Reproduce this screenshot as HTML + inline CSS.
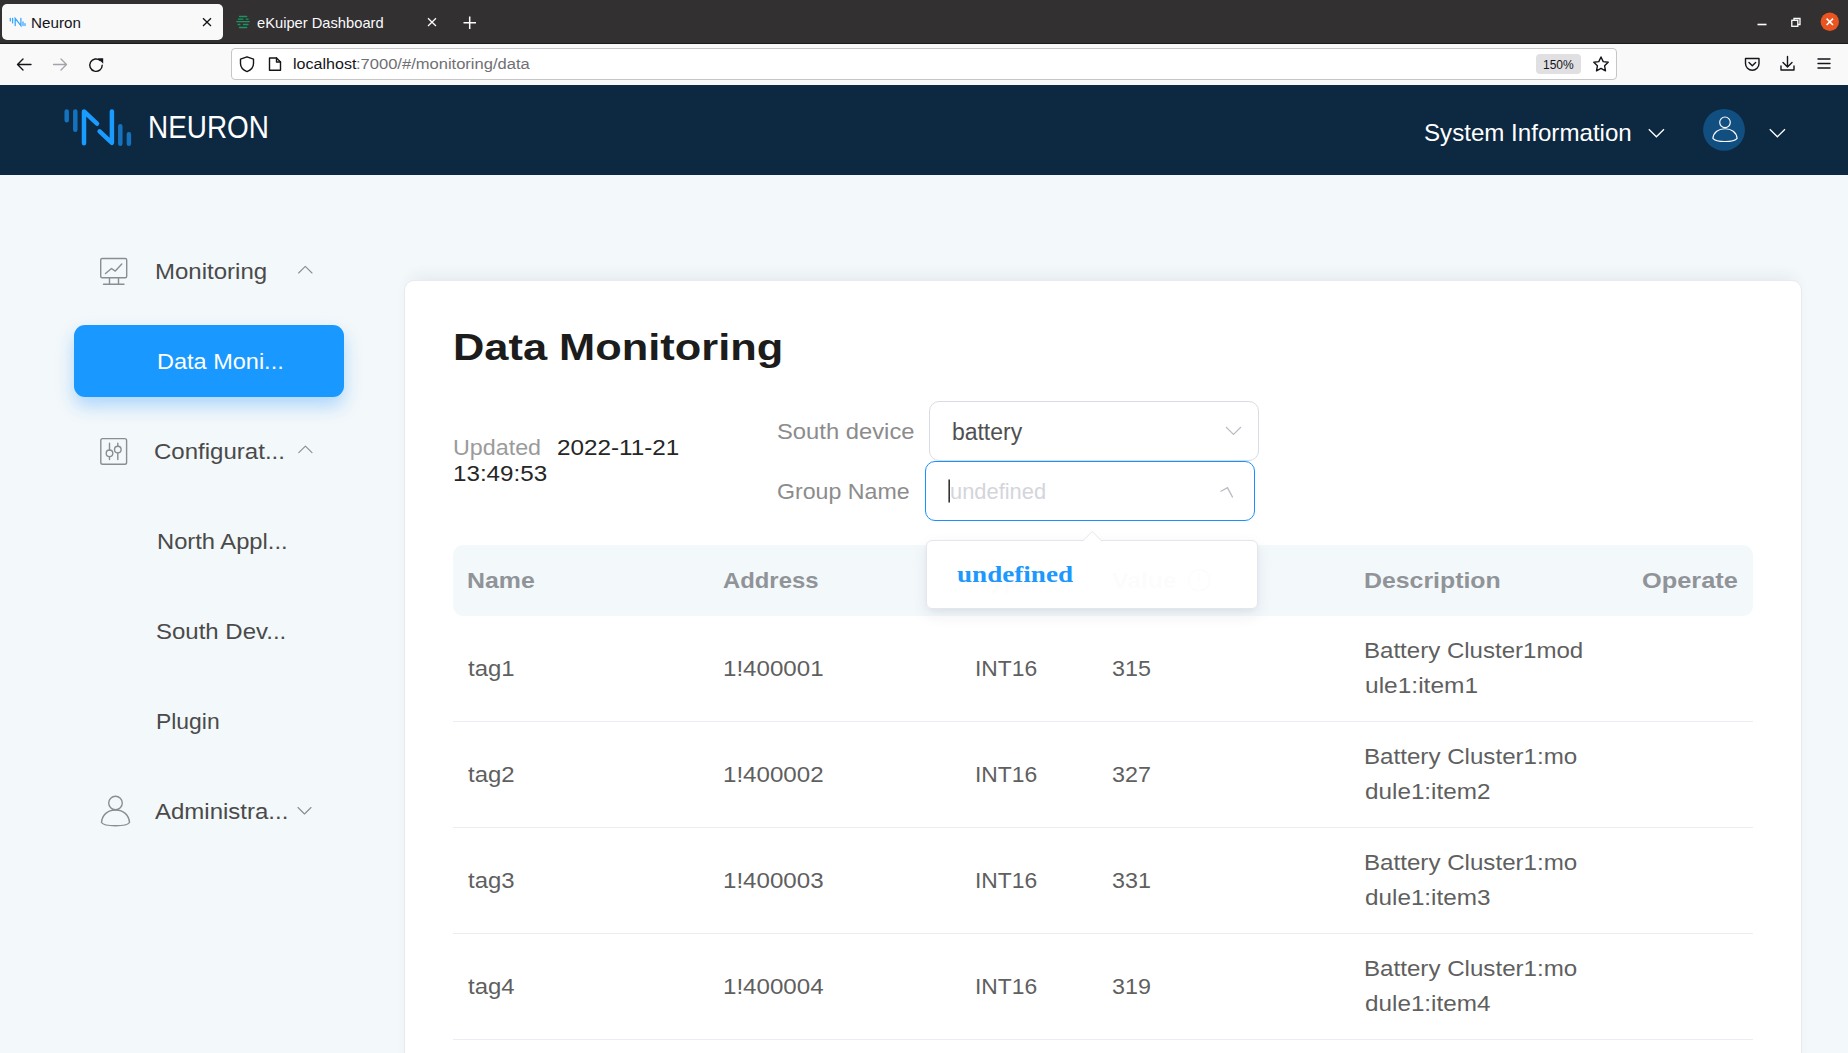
<!DOCTYPE html>
<html><head><meta charset="utf-8">
<style>
*{margin:0;padding:0;box-sizing:border-box}
html,body{width:1848px;height:1053px;overflow:hidden;background:#f3f8fa;font-family:"Liberation Sans",sans-serif;position:relative}
.t{position:absolute;white-space:nowrap;line-height:1;transform-origin:0 0}
.b{position:absolute}
svg{position:absolute;overflow:visible}
</style></head><body>
<!-- browser chrome -->
<div class="b" style="left:0;top:0;width:1848px;height:44px;background:#323031"></div>
<div class="b" style="left:2px;top:4px;width:221px;height:36px;background:#f9f9f9;border-radius:5px"></div>
<div class="b" style="left:0;top:44px;width:1848px;height:41px;background:#f9f9f9"></div>
<div class="b" style="left:0;top:43px;width:1848px;height:1px;background:#1c1b1c"></div>
<div class="b" style="left:231px;top:48px;width:1386px;height:32px;background:#fff;border:1px solid #c6c6c9;border-radius:4px"></div>
<div class="b" style="left:1536px;top:54px;width:45px;height:20px;background:#e0e0e2;border-radius:4px"></div>
<svg width="1848" height="85" style="left:0;top:0">
 <!-- tab favicon neuron -->
 <g stroke="#3ea6ff" stroke-width="1.3" stroke-linecap="round" fill="none">
  <path d="M10.3 18.3v2.6M12.6 18.3v4.6M15.2 25.6V18.3L20.9 25.6V18.3M23 22v3.6M25 23.6v2"/>
 </g>
 <!-- close x tab1 -->
 <path d="M203 18.3l8 7.7M211 18.3l-8 7.7" stroke="#15141a" stroke-width="1.3"/>
 <!-- ekuiper favicon -->
 <g stroke="#1a9563" stroke-width="1.3" stroke-linecap="round">
  <path d="M239.5 16.5h7.2M238.3 19.1h4.6M246.2 19.1h1.9M236.8 21.6h12.5M238.1 24.5h1.9M243.4 24.5h4.6M239.5 27.5h7.2"/>
 </g>
 <path d="M428 18.3l8 7.7M436 18.3l-8 7.7" stroke="#fbfbfe" stroke-width="1.3"/>
 <path d="M469.7 16.5v12.5M463.5 22.7h12.5" stroke="#fbfbfe" stroke-width="1.5"/>
 <!-- window controls -->
 <path d="M1757.5 24.5h9" stroke="#fff" stroke-width="1.6"/>
 <rect x="1791.8" y="20.3" width="6" height="6" stroke="#fff" stroke-width="1.3" fill="none"/>
 <path d="M1794 20.3v-1.8h6v6h-2" stroke="#fff" stroke-width="1.3" fill="none"/>
 <circle cx="1829.8" cy="21.8" r="9.2" fill="#e95420"/>
 <path d="M1826.6 18.6l6.4 6.4M1833 18.6l-6.4 6.4" stroke="#fff" stroke-width="1.6"/>
 <!-- nav icons -->
 <g stroke="#15141a" stroke-width="1.4" fill="none" stroke-linecap="round" stroke-linejoin="round">
  <path d="M17.5 64.5h13.5M23 59l-5.5 5.5 5.5 5.5"/>
  <path d="M100.2 60.6A6.2 6.2 0 1 0 102.2 65.2"/>
 </g>
 <path d="M97.8 58.3h5.4v5.4z" fill="#15141a"/>
 <g stroke="#a3a3ab" stroke-width="1.3" fill="none" stroke-linecap="round" stroke-linejoin="round">
  <path d="M53.5 64.5h13M61 59l5.5 5.5-5.5 5.5"/>
 </g>
 <g stroke="#15141a" stroke-width="1.4" fill="none" stroke-linejoin="round" stroke-linecap="round">
  <path d="M247 56.8l6.5 2.3v4.5c0 4-2.8 6.6-6.5 8-3.7-1.4-6.5-4-6.5-8v-4.5z"/>
  <path d="M269.5 58h7l4 4v8.2h-11z"/>
  <path d="M276.5 58v4h4"/>
  <path d="M1601 57l2.2 4.6 5 .7-3.6 3.5.9 5-4.5-2.4-4.5 2.4.9-5-3.6-3.5 5-.7z"/>
  <path d="M1745.5 58.5h13.5v5a6.75 6.75 0 0 1-13.5 0z"/>
  <path d="M1749 62.5l3.3 3.2 3.3-3.2"/>
  <path d="M1787.5 56.5v10M1783 62.5l4.5 4.5 4.5-4.5M1781 66v4h13v-4"/>
  <path d="M1818 59h12M1818 63.5h12M1818 68h12"/>
 </g>
</svg>
<!-- app header -->
<div class="b" style="left:0;top:85px;width:1848px;height:90px;background:#0d2841"></div>
<svg width="1848" height="90" style="left:0;top:85px">
 <g stroke-linecap="round" stroke-width="4.5" fill="none" stroke-linejoin="round">
  <path d="M66.7 26.5v8.8M75.3 26.5v18.3M120.3 41.2v17.5M128.9 49.3v9.4" stroke="#1572bd"/>
  <path d="M84 58.3V26.4L97 38.6M99.6 46.4L111.9 57.8V26.4" stroke="#1a9bff"/>
 </g>
 <path d="M1648.8 44.2l7.6 7.6 7.6-7.6" stroke="#fff" stroke-width="1.3" fill="none"/>
 <circle cx="1724" cy="44.9" r="20.9" fill="#114f80"/>
 <g stroke="#fff" stroke-width="1.15" fill="none">
  <circle cx="1725" cy="37.3" r="5.3"/>
  <path d="M1712.9 53.3c0.6-6 5.6-9.6 12.1-9.6s11.5 3.6 12.1 9.6c-1.6 2.2-6.6 3.2-12.1 3.2s-10.5-1-12.1-3.2z"/>
 </g>
 <path d="M1769.8 44.2l7.6 7.6 7.6-7.6" stroke="#fff" stroke-width="1.3" fill="none"/>
</svg>
<!-- sidebar -->
<div class="b" style="left:74px;top:325px;width:270px;height:72px;background:#1998ff;border-radius:11px;box-shadow:0 9px 18px rgba(24,144,255,0.32)"></div>
<svg width="400" height="900" style="left:0;top:0">
 <g stroke="#8a8d93" stroke-width="1.4" fill="none" stroke-linejoin="round" stroke-linecap="round">
  <rect x="100.7" y="258.5" width="26" height="19.3" rx="1.5"/>
  <path d="M105.5 273.5l6-5 3.8 2.6 6.5-7"/>
  <path d="M109.5 278v6M118.5 278v6M103.5 284.3h20.5"/>
  <path d="M298.6 273l6.7-6.6 6.7 6.6" stroke-width="1.1"/>
  <rect x="100.8" y="438.6" width="25.8" height="25.6" rx="1.8"/>
  <path d="M109.5 443.2v6.8M109.5 456.6v3M117.8 443.2v3M117.8 453v6.6"/>
  <circle cx="109.5" cy="453.3" r="3.3"/>
  <circle cx="117.8" cy="449.6" r="3.3"/>
  <path d="M298.8 452.7l6.6-6.6 6.6 6.6" stroke-width="1.1"/>
  <circle cx="115.5" cy="803" r="6.8"/>
  <path d="M101.5 822.5c0.5-7 5.5-12.5 14-12.5s13.5 5.5 14 12.5c-1.5 2.5-7 3.2-14 3.2s-12.5-.7-14-3.2z"/>
  <path d="M298 807.5l6.5 6.5 6.5-6.5" stroke-width="1.1"/>
 </g>
</svg>
<!-- card -->
<div class="b" style="left:404px;top:280px;width:1398px;height:820px;background:#fff;border:1px solid #e8eaf1;border-radius:10px;box-shadow:0 -10px 16px -8px rgba(40,60,100,0.09)"></div>
<!-- selects -->
<div class="b" style="left:929px;top:401px;width:330px;height:60px;background:#fff;border:1px solid #d9dce3;border-radius:10px"></div>
<div class="b" style="left:925px;top:461px;width:330px;height:60px;background:#fff;border:1.5px solid #1890ff;border-radius:10px"></div>
<svg width="1848" height="1053" style="left:0;top:0">
 <path d="M1226 427l7.5 7.5 7.5-7.5" stroke="#b9bcc4" stroke-width="1.2" fill="none"/>
 <path d="M1220.5 491.5l7-3.8 5.2 9.8" stroke="#b9bcc4" stroke-width="1.4" fill="none"/>
 <path d="M949.2 479.5v23" stroke="#333" stroke-width="1.6"/>
</svg>
<!-- table -->
<div class="b" style="left:453px;top:545px;width:1300px;height:71px;background:#f3f8fb;border-radius:10px"></div>
<div class="b" style="left:453px;top:721px;width:1300px;height:1px;background:#ebedf3"></div>
<div class="b" style="left:453px;top:827px;width:1300px;height:1px;background:#ebedf3"></div>
<div class="b" style="left:453px;top:933px;width:1300px;height:1px;background:#ebedf3"></div>
<div class="b" style="left:453px;top:1039px;width:1300px;height:1px;background:#ebedf3"></div>
<div class="t" style="left:31.06px;top:16.00px;font-size:14.6px;color:#15141a;transform:scaleX(1.0418);">Neuron</div>
<div class="t" style="left:256.80px;top:16.00px;font-size:14.6px;color:#fbfbfe;transform:scaleX(1.0069);">eKuiper Dashboard</div>
<div class="t" style="left:293.40px;top:57.00px;font-size:14.7px;color:#15141a;transform:scaleX(1.0935);">localhost</div>
<div class="t" style="left:356.47px;top:57.00px;font-size:14.7px;color:#6f6f74;transform:scaleX(1.1255);">:7000/#/monitoring/data</div>
<div class="t" style="left:1542.82px;top:58.00px;font-size:13.7px;color:#15141a;transform:scaleX(0.8777);">150%</div>
<div class="t" style="left:147.66px;top:111.00px;font-size:32px;color:#fff;transform:scaleX(0.8717);">NEURON</div>
<div class="t" style="left:1424.08px;top:122.00px;font-size:23.6px;color:#fff;transform:scaleX(1.0223);">System Information</div>
<div class="t" style="left:154.54px;top:260.00px;font-size:22.7px;color:#4a4a4a;transform:scaleX(1.0584);">Monitoring</div>
<div class="t" style="left:156.66px;top:350.00px;font-size:22.7px;color:#fff;transform:scaleX(1.0358);">Data Moni...</div>
<div class="t" style="left:154.34px;top:440.00px;font-size:22.7px;color:#4a4a4a;transform:scaleX(1.0595);">Configurat...</div>
<div class="t" style="left:156.65px;top:530.00px;font-size:22.7px;color:#4a4a4a;transform:scaleX(1.0461);">North Appl...</div>
<div class="t" style="left:156.14px;top:620.00px;font-size:22.7px;color:#4a4a4a;transform:scaleX(1.0574);">South Dev...</div>
<div class="t" style="left:156.19px;top:710.00px;font-size:22.7px;color:#4a4a4a;transform:scaleX(1.0090);">Plugin</div>
<div class="t" style="left:155.20px;top:800.00px;font-size:22.7px;color:#4a4a4a;transform:scaleX(1.0579);">Administra...</div>
<div class="t" style="left:453.00px;top:329.00px;font-size:37.7px;color:#1c1c1c;font-weight:bold;transform:scaleX(1.1514);">Data Monitoring</div>
<div class="t" style="left:452.57px;top:436.00px;font-size:22.7px;color:#9b9b9b;transform:scaleX(1.0266);">Updated</div>
<div class="t" style="left:556.53px;top:436.00px;font-size:22.7px;color:#262626;transform:scaleX(1.0696);">2022-11-21</div>
<div class="t" style="left:452.73px;top:462.00px;font-size:22.7px;color:#262626;transform:scaleX(1.0658);">13:49:53</div>
<div class="t" style="left:776.75px;top:420.00px;font-size:22.7px;color:#8c8c8c;transform:scaleX(1.0482);">South device</div>
<div class="t" style="left:776.98px;top:480.00px;font-size:22.7px;color:#8c8c8c;transform:scaleX(1.0206);">Group Name</div>
<div class="t" style="left:951.90px;top:421.00px;font-size:23px;color:#505050;">battery</div>
<div class="t" style="left:949.63px;top:481.00px;font-size:22.5px;color:#d3d5db;transform:scaleX(0.9719);">undefined</div>
<div class="t" style="left:976.60px;top:569.00px;font-size:22.7px;color:#909498;font-weight:bold;transform:scaleX(1.0661);">Type</div>
<div class="t" style="left:1111.80px;top:569.00px;font-size:22.7px;color:#909498;font-weight:bold;transform:scaleX(1.0910);">Value</div>
<div class="t" style="left:467.30px;top:569.00px;font-size:22.7px;color:#909498;font-weight:bold;transform:scaleX(1.0968);">Name</div>
<div class="t" style="left:723.20px;top:569.00px;font-size:22.7px;color:#909498;font-weight:bold;transform:scaleX(1.0514);">Address</div>
<div class="t" style="left:1364.00px;top:569.00px;font-size:22.7px;color:#909498;font-weight:bold;transform:scaleX(1.0956);">Description</div>
<div class="t" style="left:1642.30px;top:569.00px;font-size:22.7px;color:#909498;font-weight:bold;transform:scaleX(1.1184);">Operate</div>
<div class="t" style="left:468.00px;top:657.00px;font-size:22.7px;color:#5f5f5f;transform:scaleX(1.0542);">tag1</div>
<div class="t" style="left:722.74px;top:657.00px;font-size:22.7px;color:#5f5f5f;transform:scaleX(1.0633);">1!400001</div>
<div class="t" style="left:974.59px;top:657.00px;font-size:22.7px;color:#5f5f5f;transform:scaleX(1.0074);">INT16</div>
<div class="t" style="left:1112.00px;top:657.00px;font-size:22.7px;color:#5f5f5f;transform:scaleX(1.0259);">315</div>
<div class="t" style="left:1364.14px;top:639.00px;font-size:22.7px;color:#5f5f5f;transform:scaleX(1.0601);">Battery Cluster1mod</div>
<div class="t" style="left:1364.52px;top:674.00px;font-size:22.7px;color:#5f5f5f;transform:scaleX(1.0800);">ule1:item1</div>
<div class="t" style="left:468.00px;top:763.00px;font-size:22.7px;color:#5f5f5f;transform:scaleX(1.0542);">tag2</div>
<div class="t" style="left:722.74px;top:763.00px;font-size:22.7px;color:#5f5f5f;transform:scaleX(1.0633);">1!400002</div>
<div class="t" style="left:974.59px;top:763.00px;font-size:22.7px;color:#5f5f5f;transform:scaleX(1.0074);">INT16</div>
<div class="t" style="left:1112.00px;top:763.00px;font-size:22.7px;color:#5f5f5f;transform:scaleX(1.0259);">327</div>
<div class="t" style="left:1364.14px;top:745.00px;font-size:22.7px;color:#5f5f5f;transform:scaleX(1.0636);">Battery Cluster1:mo</div>
<div class="t" style="left:1365.40px;top:780.00px;font-size:22.7px;color:#5f5f5f;transform:scaleX(1.0696);">dule1:item2</div>
<div class="t" style="left:468.00px;top:869.00px;font-size:22.7px;color:#5f5f5f;transform:scaleX(1.0542);">tag3</div>
<div class="t" style="left:722.74px;top:869.00px;font-size:22.7px;color:#5f5f5f;transform:scaleX(1.0633);">1!400003</div>
<div class="t" style="left:974.59px;top:869.00px;font-size:22.7px;color:#5f5f5f;transform:scaleX(1.0074);">INT16</div>
<div class="t" style="left:1112.00px;top:869.00px;font-size:22.7px;color:#5f5f5f;transform:scaleX(1.0259);">331</div>
<div class="t" style="left:1364.14px;top:851.00px;font-size:22.7px;color:#5f5f5f;transform:scaleX(1.0636);">Battery Cluster1:mo</div>
<div class="t" style="left:1365.40px;top:886.00px;font-size:22.7px;color:#5f5f5f;transform:scaleX(1.0696);">dule1:item3</div>
<div class="t" style="left:468.00px;top:975.00px;font-size:22.7px;color:#5f5f5f;transform:scaleX(1.0542);">tag4</div>
<div class="t" style="left:722.74px;top:975.00px;font-size:22.7px;color:#5f5f5f;transform:scaleX(1.0633);">1!400004</div>
<div class="t" style="left:974.59px;top:975.00px;font-size:22.7px;color:#5f5f5f;transform:scaleX(1.0074);">INT16</div>
<div class="t" style="left:1112.00px;top:975.00px;font-size:22.7px;color:#5f5f5f;transform:scaleX(1.0259);">319</div>
<div class="t" style="left:1364.14px;top:957.00px;font-size:22.7px;color:#5f5f5f;transform:scaleX(1.0636);">Battery Cluster1:mo</div>
<div class="t" style="left:1365.40px;top:992.00px;font-size:22.7px;color:#5f5f5f;transform:scaleX(1.0696);">dule1:item4</div>
<!-- dropdown -->
<svg width="1848" height="1053" style="left:0;top:0"><g stroke="#909498" stroke-width="1.5" fill="none"><circle cx="1199.1" cy="580.2" r="10.5"/><path d="M1199.1 574v8M1199.1 584.5v2"/></g></svg>
<div class="b" style="left:926px;top:540px;width:332px;height:69px;background:rgba(255,255,255,0.972);border:1px solid #e4e6ee;border-radius:6px;box-shadow:0 6px 16px rgba(20,40,70,0.08),0 2px 4px rgba(20,40,70,0.04)"></div>
<svg width="1848" height="1053" style="left:0;top:0">
 <path d="M1082.5 541.2L1092.2 531.5L1101.9 541.2" fill="#fff" stroke="#e4e6ee" stroke-width="1"/>
 <path d="M1083.5 542L1092.2 533L1101 542z" fill="#fff"/>
</svg>
<div class="t" style="left:957.40px;top:563.00px;font-size:23px;color:#1d98fd;font-weight:bold;font-family:'Liberation Serif',serif;transform:scaleX(1.1791);">undefined</div>
</body></html>
